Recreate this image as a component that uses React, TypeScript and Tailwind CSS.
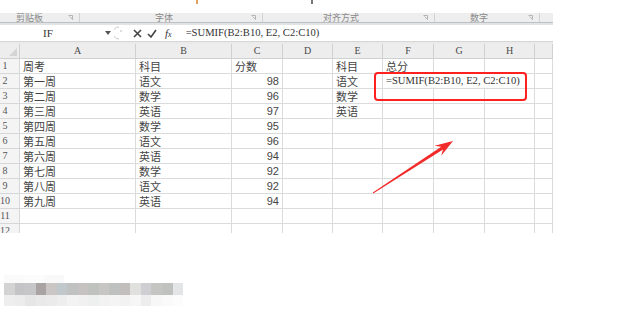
import React from "react";

const colW = [
  "w-[116px]",
  "w-[96px]",
  "w-[51px]",
  "w-[50px]",
  "w-[50px]",
  "w-[51px]",
  "w-[51px]",
  "w-[50px]",
  "w-[18px]",
];
const letters = ["A", "B", "C", "D", "E", "F", "G", "H", ""];

const rows: string[][] = [
  ["周考", "科目", "分数", "", "科目", "总分"],
  ["第一周", "语文", "98", "", "语文", "=SUMIF(B2:B10, E2, C2:C10)"],
  ["第二周", "数学", "96", "", "数学"],
  ["第三周", "英语", "97", "", "英语"],
  ["第四周", "数学", "95"],
  ["第五周", "语文", "96"],
  ["第六周", "英语", "94"],
  ["第七周", "数学", "92"],
  ["第八周", "语文", "92"],
  ["第九周", "英语", "94"],
  [],
  [],
];

const mosaicTop = [
  "bg-[#d3d3d3]",
  "bg-[#c4c4c6]",
  "bg-[#c6c6c8]",
  "bg-[#a9a3a3]",
  "bg-[#c9c6c3]",
  "bg-[#c1c8cc]",
  "bg-[#c0c2c2]",
  "bg-[#c6c2c2]",
  "bg-[#c0c2c0]",
  "bg-[#c8c6c4]",
  "bg-[#bfc0c0]",
  "bg-[#c2bebe]",
  "bg-[#e0e0de]",
  "bg-[#cfcfd3]",
  "bg-[#c5c5c3]",
  "bg-[#c0c2c0]",
  "bg-[#e2e6e6]",
];
const mosaicBottom = [
  "bg-[#eeeeee]",
  "bg-[#ececec]",
  "bg-[#e6e6e6]",
  "bg-[#e9e9e9]",
  "bg-[#ebebeb]",
  "bg-[#eeeeee]",
  "bg-[#f3f3f3]",
  "bg-[#f1f1f1]",
  "bg-[#eef0f0]",
  "bg-[#f2f2f2]",
  "bg-[#f4f4f4]",
  "bg-[#f2f2f2]",
  "bg-[#f6f6f6]",
  "bg-[#ededed]",
  "bg-[#f7f7f7]",
  "bg-[#fafafa]",
  "bg-[#fcfcfc]",
];

const cjk = "font-['Noto_Sans_CJK_SC',sans-serif]";
const serif = "font-['Liberation_Serif','Noto_Sans_CJK_SC',serif]";
const num = "font-['Liberation_Sans',sans-serif] text-[10.5px]";

const Launcher = () => (
  <svg width="6" height="6" viewBox="0 0 6 6" className="ml-auto mr-[5px] shrink-0">
    <path d="M0.5 0.5h4v4" fill="none" stroke="#b5b5b5" strokeWidth="1" />
    <path d="M1.5 1.5l3 3" stroke="#b5b5b5" strokeWidth="1" />
  </svg>
);

const RibbonGroup = ({ label, w, ml }: { label: string; w: string; ml: string }) => (
  <div className={`flex h-full shrink-0 items-center border-r border-[#d2d2d2] ${w}`}>
    <span className={`${ml} text-[9px] leading-none text-[#8a8a8a] ${cjk}`}>{label}</span>
    <Launcher />
  </div>
);

const Cell = ({ w, children, right }: { w: string; children?: React.ReactNode; right?: boolean }) => (
  <div
    className={`flex h-[15px] shrink-0 items-center overflow-visible whitespace-nowrap border-r border-b border-[#dadbdc] ${w} ${
      right ? "justify-end pr-[3px]" : "pl-[3px]"
    }`}
  >
    {children}
  </div>
);

export default function App() {
  return (
    <div className="relative h-[310px] w-[620px] overflow-hidden bg-white text-[#444]">
      {/* cropped ribbon remains */}
      <div className="flex h-[13px] items-start">
        <div className="ml-[196px] h-[4px] w-[2px] bg-[#e0a060]" />
        <div className="ml-[113px] h-[4px] w-[2px] bg-[#777]" />
      </div>

      <div className="w-[553px]">
        {/* group labels */}
        <div className="flex h-[9px] bg-[#eeeeee]">
          <RibbonGroup label="剪贴板" w="w-[80px]" ml="ml-[16px]" />
          <RibbonGroup label="字体" w="w-[183px]" ml="ml-[75px]" />
          <RibbonGroup label="对齐方式" w="w-[172px]" ml="ml-[60px]" />
          <RibbonGroup label="数字" w="w-[105px]" ml="ml-[35px]" />
          <div className="flex-1" />
        </div>
        <div className="h-[1px] bg-[#bcc0c4]" />
        <div className="h-[2px] bg-[#e1e3e5]" />

        {/* formula bar */}
        <div className="flex h-[16px] items-center bg-white">
          <div className={`w-[96px] text-center text-[11px] leading-none text-[#333] ${serif}`}>IF</div>
          <svg width="6" height="4" viewBox="0 0 6 4" className="ml-[9px]">
            <path d="M0 0h6L3 4z" fill="#555" />
          </svg>
          <svg width="10" height="14" viewBox="0 0 10 14" className="ml-[3px]">
            <path d="M5 1A6 6 0 0 0 5 13" fill="none" stroke="#c8c8c8" strokeWidth="1" />
            <path d="M6 5h2" stroke="#bbb" strokeWidth="1" />
          </svg>
          <svg width="9" height="9" viewBox="0 0 9 9" className="ml-[9px]">
            <path d="M1 1l7 7M8 1l-7 7" stroke="#444" strokeWidth="1.6" />
          </svg>
          <svg width="10" height="9" viewBox="0 0 10 9" className="ml-[5px]">
            <path d="M1 5l3 3L9 1" fill="none" stroke="#444" strokeWidth="1.6" />
          </svg>
          <span className={`ml-[8px] text-[11px] italic leading-none text-[#333] ${serif}`}>
            f<span className="text-[8px]">x</span>
          </span>
          <span className={`ml-[14px] whitespace-nowrap text-[10.6px] leading-none text-[#333] ${serif}`}>
            =SUMIF(B2:B10, E2, C2:C10)
          </span>
        </div>
        <div className="h-[1px] bg-[#d6d6d6]" />
        <div className="h-[2px] bg-[#eaeaea]" />

        {/* sheet */}
        <div className="h-[189px] overflow-hidden">
          {/* column headers */}
          <div className="flex h-[15px] bg-[#ededed]">
            <div className="relative h-[15px] w-[20px] shrink-0 border-r border-b border-[#cfd0d2]">
              <svg width="8" height="8" viewBox="0 0 8 8" className="absolute bottom-[2px] right-[2px]">
                <path d="M8 0V8H0z" fill="#d4d4d4" />
              </svg>
            </div>
            {colW.map((w, j) => (
              <div
                key={j}
                className={`flex h-[15px] shrink-0 items-center justify-center border-r border-b border-[#cfd0d2] text-[10px] leading-none text-[#4a4a4a] ${serif} ${w}`}
              >
                {letters[j]}
              </div>
            ))}
          </div>

          {rows.map((r, i) => (
            <div key={i} className="flex h-[15px]">
              <div className="flex h-[15px] w-[20px] shrink-0 items-center overflow-hidden border-r border-b border-[#d6d7d8] bg-[#f4f4f4]">
                <span className={`-ml-[10px] w-[30px] shrink-0 text-center text-[10px] leading-none text-[#555] ${serif}`}>
                  {i + 1}
                </span>
              </div>
              {i === 1 ? (
                <>
                  {colW.slice(0, 5).map((w, j) => (
                    <Cell key={j} w={w} right={j === 2}>
                      <span className={`text-[11px] leading-none ${j === 2 ? num : cjk}`}>{r[j]}</span>
                    </Cell>
                  ))}
                  <Cell w="w-[152px]">
                    <span className={`text-[10.6px] leading-none text-[#333] ${serif}`}>{r[5]}</span>
                  </Cell>
                  <Cell w="w-[18px]" />
                </>
              ) : (
                colW.map((w, j) => (
                  <Cell key={j} w={w} right={j === 2 && i > 0}>
                    {r[j] ? (
                      <span className={`text-[11px] leading-none ${j === 2 && i > 0 ? num : cjk}`}>{r[j]}</span>
                    ) : null}
                  </Cell>
                ))
              )}
            </div>
          ))}
        </div>
      </div>

      {/* pixelated blur at the bottom */}
      <div className="ml-[4px] mt-[42px] w-[179px]">
        <div className="flex h-[8px] w-[60px] opacity-40">
          <div className="flex-1 bg-[#f4f4f4]" />
          <div className="flex-1 bg-[#f8f8f8]" />
          <div className="flex-1 bg-[#f2f2f2]" />
        </div>
        <div className="flex h-[12px]">
          {mosaicTop.map((c, k) => (
            <div key={k} className={`flex-1 ${c}`} />
          ))}
        </div>
        <div className="flex h-[11px]">
          {mosaicBottom.map((c, k) => (
            <div key={k} className={`flex-1 ${c}`} />
          ))}
        </div>
      </div>

      {/* red annotation */}
      <div className="absolute left-[374px] top-[72px] h-[29px] w-[153px] rounded-[4px] border-2 border-[#ff2020]" />
      <svg className="pointer-events-none absolute left-0 top-0" width="620" height="310" viewBox="0 0 620 310">
        <polygon
          points="453,141 441.2,155.8 443,149.4 373.2,193.4 372.8,192.6 441.2,146.8 434.6,145.8"
          fill="#f22a2a"
        />
      </svg>
    </div>
  );
}
